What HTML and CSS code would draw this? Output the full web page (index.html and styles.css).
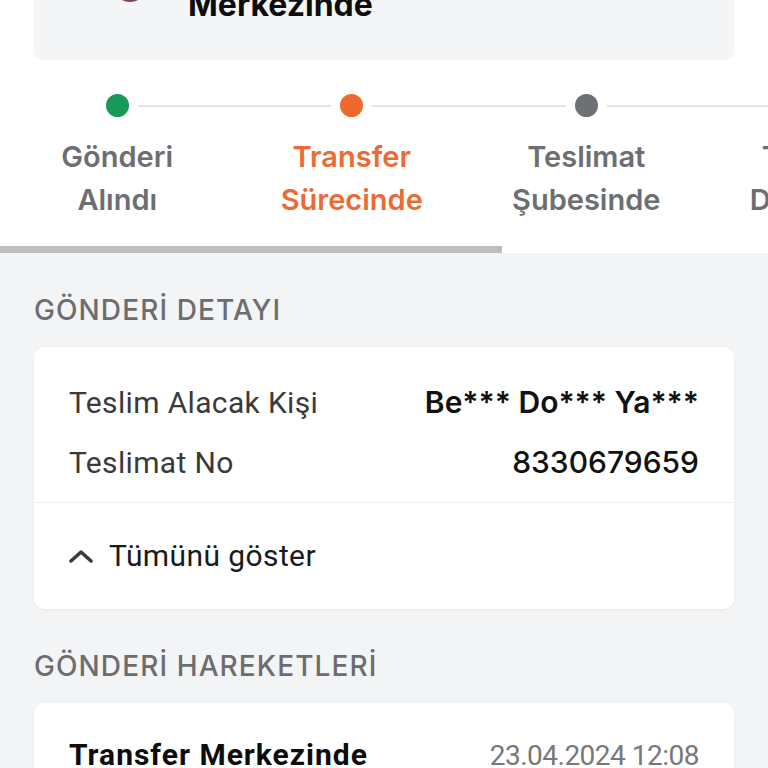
FILE: index.html
```html
<!DOCTYPE html>
<html lang="tr">
<head>
    <meta charset="utf-8">
    <title>Gönderi Takip</title>
    <link rel="stylesheet" href="styles.css">
</head>
<body>
<div class="top">
    <div class="status-card">
        <span class="status-icon"></span>
        <div class="status-text">Transfer<br>Merkezinde</div>
    </div>
    <div class="stepper">
        <div class="step done">
            <div class="track"><span class="line blank"></span><span class="dot"></span><span class="line"></span></div>
            <div class="label">Gönderi<br>Alındı</div>
        </div>
        <div class="step active">
            <div class="track"><span class="line"></span><span class="dot"></span><span class="line"></span></div>
            <div class="label">Transfer<br>Sürecinde</div>
        </div>
        <div class="step">
            <div class="track"><span class="line"></span><span class="dot"></span><span class="line"></span></div>
            <div class="label">Teslimat<br>Şubesinde</div>
        </div>
        <div class="step">
            <div class="track"><span class="line"></span><span class="dot"></span><span class="line blank"></span></div>
            <div class="label">Teslimat<br>Dağıtımda</div>
        </div>
    </div>
    <div class="scroll-track"><div class="scroll-thumb"></div></div>
</div>

<div class="page">
    <h2 class="section-title">GÖNDERİ DETAYI</h2>
    <div class="card">
        <div class="rows">
            <div class="row"><span class="key">Teslim Alacak Kişi</span><span class="val bold">Be*** Do*** Ya***</span></div>
            <div class="row"><span class="key">Teslimat No</span><span class="val">8330679659</span></div>
        </div>
        <div class="toggle">
            <svg class="chevron" width="24" height="14" viewBox="0 0 24 14"><path d="M2 12 L12 3 L22 12" fill="none" stroke="#3a3a3a" stroke-width="3.5" stroke-linecap="round" stroke-linejoin="round"/></svg>
            <span>Tümünü göster</span>
        </div>
    </div>

    <h2 class="section-title">GÖNDERİ HAREKETLERİ</h2>
    <div class="card move">
        <div class="row"><span class="move-title">Transfer Merkezinde</span><span class="date">23.04.2024 12:08</span></div>
    </div>
</div>
</body>
</html>
```

FILE: styles.css
```css
*{margin:0;padding:0;box-sizing:border-box;}
body{background:#f3f4f6;font-family:Roboto,"Noto Sans",sans-serif;color:#111;overflow:hidden;}

.top{background:#fff;}
.status-card{margin:-52px 34px 0;height:111px;background:#f4f5f7;border-radius:10px;box-shadow:0 1px 2px rgba(0,0,0,0.05);display:flex;align-items:flex-end;padding:0 0 35px 79px;}
.status-icon{width:34px;height:34px;border-radius:50%;border:2px solid #7d4257;margin-bottom:22px;flex:none;}
.status-text{margin-left:41px;font-family:Inter,sans-serif;font-size:32px;font-weight:700;line-height:38px;color:#0d0d0d;}

.stepper{display:flex;width:938px;padding-top:35px;}
.step{flex:0 0 234.5px;display:flex;flex-direction:column;align-items:center;}
.track{width:100%;display:grid;grid-template-columns:1fr 23px 1fr;align-items:center;height:23px;}
.dot{width:23px;height:23px;border-radius:50%;background:#6d7075;}
.line{height:2px;background:#e2e3e5;}
.line:first-child{margin-right:9px;}
.line:last-child{margin-left:9px;}
.line.blank{background:transparent;}
.step.done .dot{background:#17995a;}
.step.active .dot{background:#ef692f;}
.label{margin-top:18px;font-family:Inter,sans-serif;font-size:29px;font-weight:600;line-height:43px;text-align:center;color:#6c6e72;}
.step.active .label{color:#ec6a33;}

.scroll-track{margin-top:25px;height:7px;background:#fff;}
.scroll-thumb{width:502px;height:7px;background:#bdbdbd;}

.page{padding:0 34px;}
.section-title{margin-top:40px;font-family:Inter,sans-serif;font-size:28px;font-weight:500;letter-spacing:1.1px;line-height:34px;color:#6d6d70;}
.section-title + .card{margin-top:20px;}
.card{background:#fff;border-radius:10px;box-shadow:0 1px 3px rgba(0,0,0,0.06);}
.rows{padding:37px 35px 21px;display:flex;flex-direction:column;gap:23px;border-bottom:1px solid #eeeff1;}
.row{display:flex;justify-content:space-between;align-items:baseline;font-size:30px;line-height:36px;}
.key{color:#3a3a3a;letter-spacing:0.35px;}
.val{font-family:Inter,sans-serif;color:#111;font-weight:500;}
.val.bold{font-weight:600;}
.toggle{display:flex;align-items:center;padding:35px 35px;font-size:30px;line-height:36px;color:#1a1a1a;letter-spacing:0.4px;}
.chevron{margin-right:16px;}
.card.move{padding:34px 35px 30px;}
.move-title{font-weight:700;letter-spacing:1px;color:#0d0d0d;}
.date{font-size:28px;letter-spacing:-0.5px;color:#77787b;}
```
